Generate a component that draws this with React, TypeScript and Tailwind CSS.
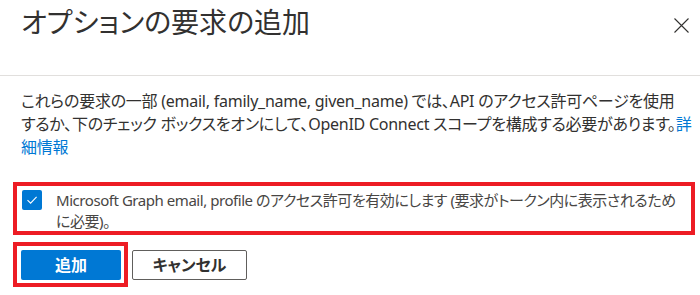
import React from "react";

const font = '"Noto Sans", "Noto Sans CJK JP", sans-serif';
const palt = { fontFeatureSettings: '"palt"' } as React.CSSProperties;

export default function App() {
  return (
    <div
      className="w-[700px] h-[295px] bg-white overflow-hidden text-[#323130]"
      style={{ fontFamily: font }}
    >
      <div className="h-[76px] border-b border-[#e1dfdd] flex items-start justify-between pl-[21px] pr-[11px]">
        <h1
          className="mt-[1px] text-[28px] leading-[40px] font-normal text-[#323130]"
          style={{ fontFamily: '"Noto Sans CJK JP", sans-serif', ...palt }}
        >
          オプションの要求の追加
        </h1>
        <button className="mt-[18px] w-[15px] h-[15px] flex items-center justify-center">
          <svg width="15" height="15" viewBox="0 0 15 15">
            <path d="M0.5 0.5 L14.5 14.5 M14.5 0.5 L0.5 14.5" stroke="#323130" strokeWidth="1.1" fill="none" />
          </svg>
        </button>
      </div>
      <div className="pl-[21px] pr-[0px] pt-[14px]">
        <p className="text-[16px] leading-[23px] tracking-[-0.25px] text-[#323130]" style={palt}>
          これらの要求の一部 (email, family_name, given_name) では、API のアクセス許可ページを使用
          <br />
          するか、下のチェック ボックスをオンにして、OpenID Connect スコープを構成する必要があります。
          <span className="text-[#0078d4]">詳細情報</span>
        </p>
      </div>
      <div className="ml-[13px] mt-[23px] w-[682px] h-[53px] border-[4px] border-[#ed1c24] flex items-start pl-[5px] pt-[4px]">
        <div className="w-[20px] h-[20px] bg-[#0078d4] rounded-[2px] flex items-center justify-center shrink-0">
          <svg width="14" height="14" viewBox="0 0 14 14">
            <path d="M2.5 7.2 L5.6 10.2 L11.6 3.8" stroke="white" strokeWidth="1.1" fill="none" />
          </svg>
        </div>
        <p
          className="ml-[14px] text-[15px] leading-[21px] tracking-[-0.45px] whitespace-nowrap text-[#484644]"
          style={palt}
        >
          Microsoft Graph email, profile のアクセス許可を有効にします (要求がトークン内に表示されるため
          <br />
          に必要)。
        </p>
      </div>
      <div className="mt-[7px] ml-[13px] flex items-start">
        <div className="w-[115px] h-[45px] border-[4px] border-[#ed1c24] pl-[4px] pt-[4px]">
          <button
            className="w-[100px] h-[30px] bg-[#0078d4] rounded-[2px] text-white text-[16px] font-bold flex items-center justify-center"
            style={palt}
          >
            追加
          </button>
        </div>
        <button
          className="ml-[4px] mt-[8px] w-[115px] h-[30px] border border-[#605e5c] rounded-[2px] text-[16px] font-semibold text-[#323130] flex items-center justify-center"
          style={palt}
        >
          キャンセル
        </button>
      </div>
    </div>
  );
}
